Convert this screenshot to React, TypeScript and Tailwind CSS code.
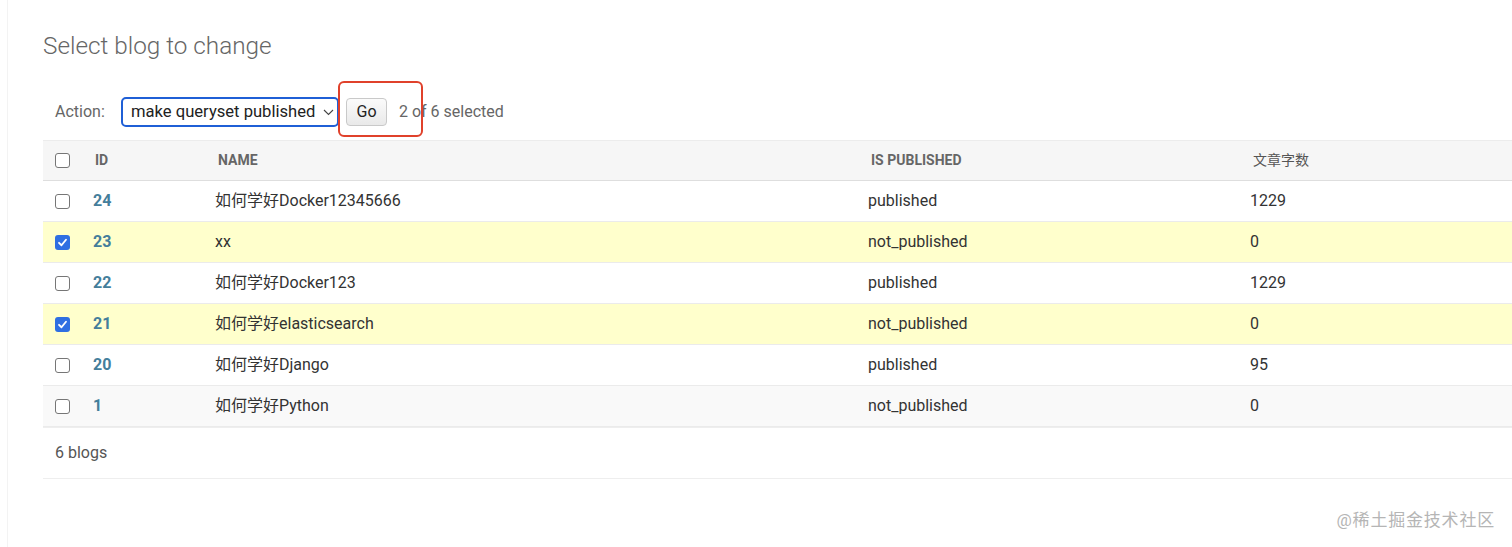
import React from 'react';

type Blog = {
  id: number;
  name: string;
  published: boolean;
  words: number;
  selected: boolean;
};

const blogs: Blog[] = [
  { id: 24, name: '如何学好Docker12345666', published: true, words: 1229, selected: false },
  { id: 23, name: 'xx', published: false, words: 0, selected: true },
  { id: 22, name: '如何学好Docker123', published: true, words: 1229, selected: false },
  { id: 21, name: '如何学好elasticsearch', published: false, words: 0, selected: true },
  { id: 20, name: '如何学好Django', published: true, words: 95, selected: false },
  { id: 1, name: '如何学好Python', published: false, words: 0, selected: false },
];

const font = { fontFamily: 'Roboto, "Noto Sans CJK SC", "Liberation Sans", sans-serif' };

const Checkbox: React.FC<{ checked?: boolean }> = ({ checked }) =>
  checked ? (
    <div className="w-[15px] h-[15px] rounded-[3px] bg-[#2f6fe2] flex items-center justify-center">
      <svg width="11" height="11" viewBox="0 0 12 12">
        <path d="M2.2 6.3 L4.9 9 L9.8 3" fill="none" stroke="white" strokeWidth="2" strokeLinecap="round" strokeLinejoin="round" />
      </svg>
    </div>
  ) : (
    <div className="w-[15px] h-[15px] rounded-[3px] border border-[#767676] bg-white" />
  );

const cols = 'grid grid-cols-[38px_122px_653px_382px_1fr]';

const App: React.FC = () => {
  return (
    <div className="w-[1512px] h-[547px] bg-white overflow-hidden" style={font}>
      <div className="ml-[7px] h-full border-l border-[#f3f3f3] pl-[35px]">
        <h1 className="pt-[30px] text-[24.3px] leading-[32px] font-light text-[#666]">Select blog to change</h1>

        {/* actions */}
        <div className="relative flex items-center pt-[35px] pb-[13px] pl-[12px]">
          <span className="text-[16px] text-[#666] w-[66px]">Action:</span>
          <div className="w-[218px] h-[30px] border-2 border-[#1f5fd6] rounded-[5px] flex items-center pl-[8px] pr-[3px] text-[16.6px] text-[#222]">
            <span className="flex-1 whitespace-nowrap">make queryset published</span>
            <svg width="11" height="7" viewBox="0 0 11 7">
              <path d="M1 1 L5.5 5.5 L10 1" fill="none" stroke="#444" strokeWidth="1.1" />
            </svg>
          </div>
          <button className="ml-[7px] w-[41px] h-[28px] rounded-[4px] border border-[#c9c9c9] bg-gradient-to-b from-[#fbfbfb] to-[#e9e9e9] text-[16px] text-[#222]">
            Go
          </button>
          <span className="ml-[12px] text-[16px] text-[#666]">2 of 6 selected</span>
          <div className="absolute left-[295px] top-[19px] w-[85px] h-[56px] border-[2.5px] border-[#e0412b] rounded-[6px]" />
        </div>

        {/* table */}
        <div className="border-t border-[#ececec]">
          <div className={`${cols} h-[40px] items-center bg-[#f6f6f6] border-b border-[#dedede] text-[14px] font-bold text-[#666]`}>
            <div className="pl-[12px]"><Checkbox /></div>
            <div className="pl-[14px]">ID</div>
            <div className="pl-[15px]">NAME</div>
            <div className="pl-[15px]">IS PUBLISHED</div>
            <div className="pl-[15px] font-normal text-[#555]">文章字数</div>
          </div>
          {blogs.map((b, i) => (
            <div
              key={b.id}
              className={`${cols} h-[41px] items-center border-b border-[#ebebeb] text-[16px] text-[#333] ${
                b.selected ? 'bg-[#ffffcc]' : i % 2 === 1 ? 'bg-[#f9f9f9]' : 'bg-white'
              }`}
            >
              <div className="pl-[12px]"><Checkbox checked={b.selected} /></div>
              <div className="pl-[12px] font-bold text-[#447e9b]">{b.id}</div>
              <div className="pl-[12px]">{b.name}</div>
              <div className="pl-[12px]">{b.published ? 'published' : 'not_published'}</div>
              <div className="pl-[12px]">{b.words}</div>
            </div>
          ))}
          <div className="h-[52px] border-t border-[#eeeeee] border-b flex items-center pl-[12px] text-[16px] text-[#555]">
            6 blogs
          </div>
        </div>

        <div className="flex justify-end pr-[17px] pt-[29px]">
          <span className="text-[17px] text-[#b5b5b5] tracking-[0.8px]">@稀土掘金技术社区</span>
        </div>
      </div>
    </div>
  );
};

export default App;
